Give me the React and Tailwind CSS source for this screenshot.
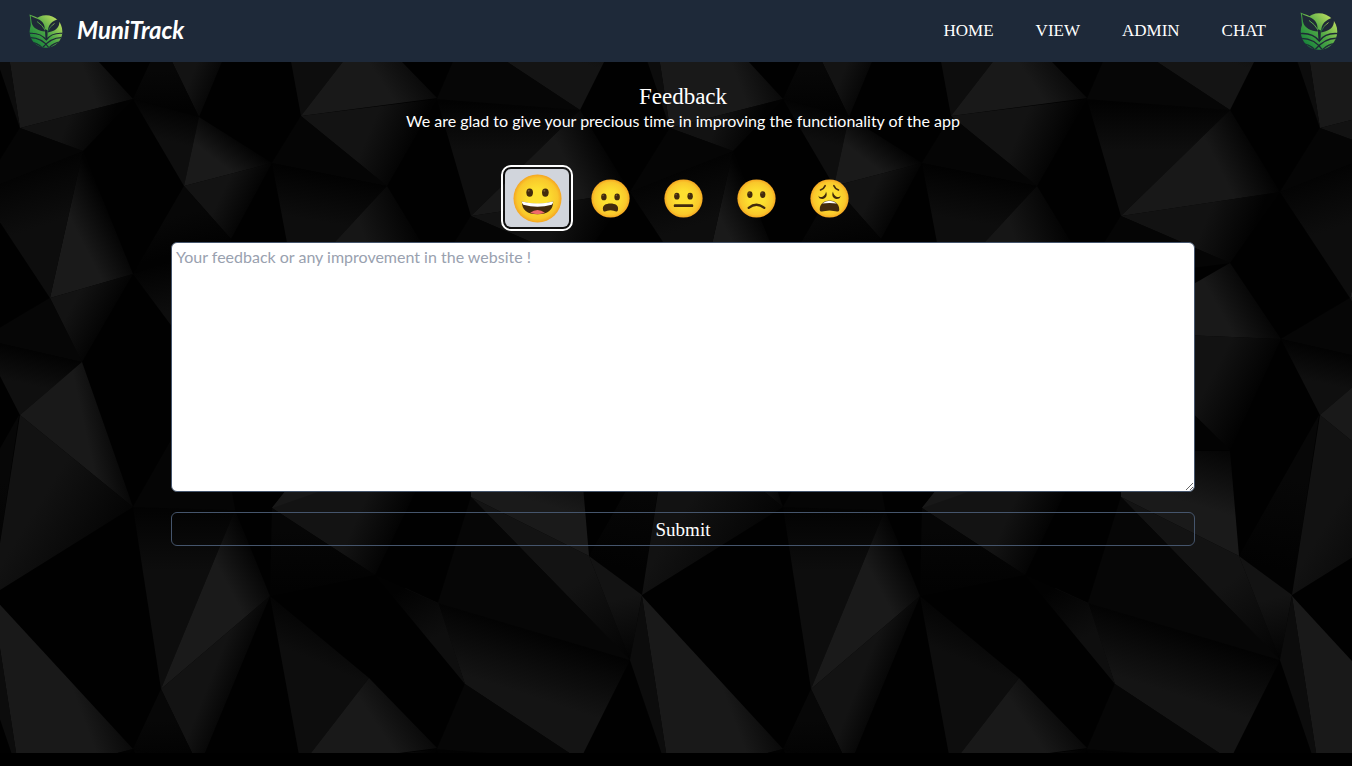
import { useState } from 'react';

// Facets of the 650x650 wallpaper tile: points, fill, and an optional
// fade "x1 y1 x2 y2" from the fill to black.
const FACETS = [
  ['-8,-54 20,128 133,99', '#191919', [80, 60, 128, 42]],
  ['-8,-54 -20,10 20,128', '#0c0c0c'],
  ['20,128 133,99 83,151', '#121212', [70, 115, 108, 130]],
  ['20,128 83,151 -20,192', '#050505'],
  ['235,510 133,507 161,689', '#0d0d0d', [160, 570, 160, 505]],
  ['235,510 161,689 270,596', '#1a1a1a', [230, 590, 268, 570]],
  ['161,689 270,596 199,767', '#131313', [210, 680, 240, 692]],
  ['161,39 133,99 199,117', '#070707', [160, 70, 162, 112]],
  ['270,596 301,766 369,678', '#0d0d0d', [290, 650, 310, 605]],
  ['369,678 301,766 437,748', '#191919', [380, 730, 425, 700]],
  ['301,116 437,99 387,186', '#131313', [370, 130, 412, 148]],
  ['301,116 387,186 272,163', '#050505'],
  ['133,99 199,117 184,186', '#0e0e0e', [165, 140, 174, 106]],
  ['199,117 272,163 184,186', '#1a1a1a', [216, 160, 236, 134]],
  ['184,186 272,163 231,239', '#131313', [225, 187, 256, 202]],
  ['184,186 231,239 133,274', '#070707', [180, 215, 190, 250]],
  ['83,151 133,274 50,298', '#1a1a1a', [80, 238, 115, 220]],
  ['83,151 50,298 -20,192', '#0d0d0d', [45, 225, 25, 165]],
  ['50,298 133,274 82,362', '#131313', [75, 300, 112, 320]],
  ['50,298 82,362 -19,339', '#060606'],
  ['-19,339 82,362 20,415', '#0f0f0f', [30, 385, 38, 350]],
  ['82,362 20,415 133,507', '#191919', [85, 430, 122, 422]],
  ['20,415 133,507 -8,595', '#121212', [60, 470, 140, 520]],
  ['133,274 231,239 231,406', '#0d0d0d', [180, 310, 170, 262]],
  ['133,507 210,372 235,510', '#050505'],
  ['272,163 387,186 295,285', '#0d0d0d', [310, 220, 318, 172]],
  ['387,186 295,285 430,257', '#161616', [365, 240, 415, 222]],
  ['437,99 471,216 580,110', '#0e0e0e', [490, 150, 490, 102]],
  ['437,99 465,34 580,110', '#060606'],
  ['438,603 465,684 580,760 630,660', '#141414', [517, 692, 537, 630]],
  ['438,603 465,684 405,588', '#0c0c0c'],
  ['375,575 438,603 465,684', '#0e0e0e', [430, 640, 405, 588]],
  ['471,216 580,110 630,192', '#181818', [570, 170, 610, 150]],
  ['471,216 630,192 580,263', '#121212', [560, 210, 604, 228]],
  ['471,216 580,263 430,282', '#050505'],
  ['580,263 631,339 460,332', '#191919', [575, 320, 615, 298]],
  ['460,332 631,339 580,450', '#121212', [565, 370, 608, 392]],
  ['460,332 580,450 480,450', '#030303'],
  ['471,497 471,451 580,451 589,556', '#1a1a1a', [530, 500, 550, 435]],
  ['589,556 669,415 642,595', '#070707', [645, 480, 630, 570]],
  ['471,497 589,556 630,660', '#131313', [570, 590, 630, 665]],
  ['589,556 642,595 630,660', '#131313', [615, 600, 630, 662]],
  ['471,497 438,603 630,660', '#060606'],
  ['272,508 375,575 430,462 310,460', '#131313', [355, 522, 396, 540]],
  ['272,508 310,460 400,463', '#181818'],
  ['272,508 375,575 270,596', '#060606', [300, 530, 300, 590]],
];
const OFFSETS = [-650, 0, 650];

function Wallpaper() {
  return (
    <svg className="absolute inset-0 h-full w-full" aria-hidden="true">
      <defs>
        {FACETS.map(([, color, fade], i) =>
          fade ? (
            <linearGradient key={i} id={`fade${i}`} gradientUnits="userSpaceOnUse" x1={fade[0]} y1={fade[1]} x2={fade[2]} y2={fade[3]}>
              <stop offset="0" stopColor={color} />
              <stop offset="1" stopColor="#020202" />
            </linearGradient>
          ) : null
        )}
        <g id="facets">
          {FACETS.map(([points, color, fade], i) => (
            <polygon key={i} points={points} fill={fade ? `url(#fade${i})` : color} />
          ))}
        </g>
        <pattern id="tile" width="650" height="650" patternUnits="userSpaceOnUse">
          <rect width="650" height="650" fill="#010101" />
          {OFFSETS.map((x) => OFFSETS.map((y) => <use key={`${x},${y}`} href="#facets" x={x} y={y} />))}
        </pattern>
      </defs>
      <rect width="100%" height="100%" fill="url(#tile)" />
    </svg>
  );
}

function Logo({ id, className }) {
  return (
    <svg viewBox="0 0 36 36" className={className} role="img" aria-label="MuniTrack logo">
      <defs>
        <linearGradient id={id} x1="0" y1="1" x2="1" y2="0">
          <stop offset="0.1" stopColor="#12803a" />
          <stop offset="0.5" stopColor="#4fa845" />
          <stop offset="0.9" stopColor="#c3e061" />
        </linearGradient>
        <clipPath id={`${id}-disc`}>
          <circle cx="18" cy="18.5" r="17.3" />
        </clipPath>
      </defs>
      <path d="M0.5 0.5C6 3 12 4 16 9L14 20L3 17C1 12 2 6 0.5 0.5Z" fill={`url(#${id})`} />
      <circle cx="18" cy="18.5" r="17.3" fill={`url(#${id})`} />
      <g clipPath={`url(#${id}-disc)`} fill="none" stroke="#1f2937" strokeWidth="1.3">
        <path d="M0 20.5Q12 19.5 18.3 27.5Q24 19.5 36 20.5" />
        <path d="M0 25Q14 24.500 22 37" />
        <path d="M1 30Q9 30 14 36" />
        <path d="M36 25Q24 24 14 36" />
        <path d="M36 30Q28 29 21 36" />
      </g>
      <g fill="#1f2937">
        <path d="M1.800 2C6 4.500 13 5 15.500 10.500C17 13.500 16.500 16 16.800 18.500C11 18 4 15.500 2.800 9Z" />
        <path d="M32 5C33 12 31 17.500 20 19.500C19.800 11 24 7.500 32 5Z" />
        <path d="M16.800 16L19.800 17.500L19.400 27H17.500Z" />
      </g>
      <path d="M8.500 8Q14 11.500 17 17" fill="none" stroke={`url(#${id})`} strokeWidth="0.9" />
      <path d="M20 18.500Q22 13 27 10" fill="none" stroke={`url(#${id})`} strokeWidth="0.7" />
    </svg>
  );
}

const INK = '#422b0d';

const FACES = [
  {
    name: 'Grinning',
    art: (
      <>
        <ellipse cx="17" cy="19" rx="3.400" ry="4.300" fill={INK} />
        <ellipse cx="33" cy="19" rx="3.400" ry="4.300" fill={INK} />
        <circle cx="16" cy="17" r="1" fill="#7a5a2c" />
        <circle cx="32" cy="17" r="1" fill="#7a5a2c" />
        <path d="M9 28Q25 33 41 28Q41 41 25 41Q9 41 9 28Z" fill={INK} />
        <path d="M9 28Q25 32 41 28Q41 30 39.500 31.500Q25 35.500 10.500 31.500Q9 30 9 28Z" fill="#fff" />
        <path d="M17.500 39.500Q25 34 32.500 39.500Q25 42.500 17.500 39.500Z" fill="#f06a6a" />
      </>
    ),
  },
  {
    name: 'Frowning with open mouth',
    art: (
      <>
        <ellipse cx="16.500" cy="23" rx="3.500" ry="4.400" fill={INK} />
        <ellipse cx="33.500" cy="23" rx="3.500" ry="4.400" fill={INK} />
        <circle cx="15.500" cy="21" r="1" fill="#7a5a2c" />
        <circle cx="32.500" cy="21" r="1" fill="#7a5a2c" />
        <path d="M15.500 40C14 34 19 31.500 25 31.500C31 31.500 36 34 34.500 40C33.500 43.500 29 40 25 40C21 40 16.500 43.500 15.500 40Z" fill={INK} />
      </>
    ),
  },
  {
    name: 'Neutral',
    art: (
      <>
        <ellipse cx="16.500" cy="22" rx="3.500" ry="4.400" fill={INK} />
        <ellipse cx="33.500" cy="22" rx="3.500" ry="4.400" fill={INK} />
        <circle cx="15.500" cy="20" r="1" fill="#7a5a2c" />
        <circle cx="32.500" cy="20" r="1" fill="#7a5a2c" />
        <rect x="12.500" y="32.500" width="25" height="3.500" rx="1.500" fill={INK} />
      </>
    ),
  },
  {
    name: 'Slightly frowning',
    art: (
      <>
        <ellipse cx="16.500" cy="20" rx="3.400" ry="4.400" fill={INK} />
        <ellipse cx="33" cy="20" rx="3.400" ry="4.400" fill={INK} />
        <circle cx="15.500" cy="18" r="1" fill="#7a5a2c" />
        <circle cx="32" cy="18" r="1" fill="#7a5a2c" />
        <path d="M15 37Q25 29 35 37" fill="none" stroke={INK} strokeWidth="3" strokeLinecap="round" />
      </>
    ),
  },
  {
    name: 'Weary',
    art: (
      <>
        <g fill="none" stroke={INK} strokeWidth="2" strokeLinecap="round">
          <path d="M13.500 14Q18 12.500 19.500 8.500" />
          <path d="M36.500 14Q32 12.500 30.500 8.500" />
        </g>
        <path d="M11 21C12 25 20 23 20.500 16C23 21 20 25.500 16 25.500C13 25.500 10.500 24 11 21Z" fill={INK} />
        <path d="M39 21C38 25 30 23 29.500 16C27 21 30 25.500 34 25.500C37 25.500 39.500 24 39 21Z" fill={INK} />
        <path d="M12.500 39C12.500 31 19 27.500 25 27.500C31 27.500 37.500 31 37.500 39C37.500 44 31 40.500 25 40.500C19 40.500 12.500 44 12.500 39Z" fill={INK} />
        <path d="M15.500 31.500Q25 24 34.500 31.500Q25 30 15.500 31.500Z" fill="#fff" />
      </>
    ),
  },
];

function Face({ children, className }) {
  return (
    <svg viewBox="0 0 50 50" className={className} aria-hidden="true">
      <circle cx="25" cy="25" r="24.500" fill="url(#skin)" />
      {children}
    </svg>
  );
}

const LINKS = ['Home', 'View', 'Admin', 'Chat'];

export default function App() {
  const [mood, setMood] = useState(0);
  return (
    <div className="min-h-screen bg-black text-white">
      <svg className="absolute h-0 w-0" aria-hidden="true">
        <defs>
          <radialGradient id="skin">
            <stop offset="0.4" stopColor="#fde030" />
            <stop offset="0.85" stopColor="#f9c72b" />
            <stop offset="1" stopColor="#f5a521" />
          </radialGradient>
        </defs>
      </svg>
      <div className="relative">
        <Wallpaper />
        <header className="relative flex items-center justify-between bg-gray-800 py-3 pl-[29px] pr-3.5">
          <a href="#home" className="flex items-center gap-3.5">
            <Logo id="brand" className="size-[34px]" />
            <span className="pb-0.5 font-['Lato',sans-serif] text-2xl font-bold italic">MuniTrack</span>
          </a>
          <nav className="flex items-center gap-[42px] font-['Liberation_Serif',serif] text-[17px] uppercase">
            {LINKS.map((label) => (
              <a key={label} href={`#${label.toLowerCase()}`}>
                {label}
              </a>
            ))}
            <a href="#profile" aria-label="Profile" className="-ml-2">
              <Logo id="profile" className="size-[38px]" />
            </a>
          </nav>
        </header>

        <main className="relative pb-[207px] pl-3.5 pt-[22px]">
          <form className="mx-auto flex max-w-5xl flex-col" onSubmit={(e) => e.preventDefault()}>
            <h1 className="text-center font-['Liberation_Serif',serif] text-[23px] leading-[25px]">Feedback</h1>
            <p className="text-center font-['Lato',sans-serif] text-base leading-6 [font-variant-ligatures:none]">
              We are glad to give your precious time in improving the functionality of the app
            </p>
            <div className="mt-9 flex items-center justify-center gap-[9px]">
              {FACES.map(({ name, art }, i) => (
                <button
                  key={name}
                  type="button"
                  aria-label={name}
                  aria-pressed={mood === i}
                  onClick={() => setMood(i)}
                  className={
                    mood === i
                      ? 'flex h-[58px] w-16 items-center justify-center rounded-md bg-gray-300 outline-2 outline-offset-2 outline-white'
                      : 'flex h-[58px] w-16 items-center justify-center rounded-md'
                  }
                >
                  <Face className={mood === i ? 'size-[49px]' : 'size-[39px]'}>{art}</Face>
                </button>
              ))}
            </div>
            <textarea
              aria-label="Your feedback"
              placeholder="Your feedback or any improvement in the website !"
              className="mt-[15px] h-[250px] resize rounded-md border border-slate-600 bg-white px-1 py-0.5 font-['Lato',sans-serif] text-base text-black placeholder:text-gray-400"
            />
            <button
              type="submit"
              className="mt-5 rounded-md border border-slate-600 pt-0.5 font-['Liberation_Serif',serif] text-[19px] leading-[30px]"
            >
              Submit
            </button>
          </form>
        </main>
      </div>
    </div>
  );
}
